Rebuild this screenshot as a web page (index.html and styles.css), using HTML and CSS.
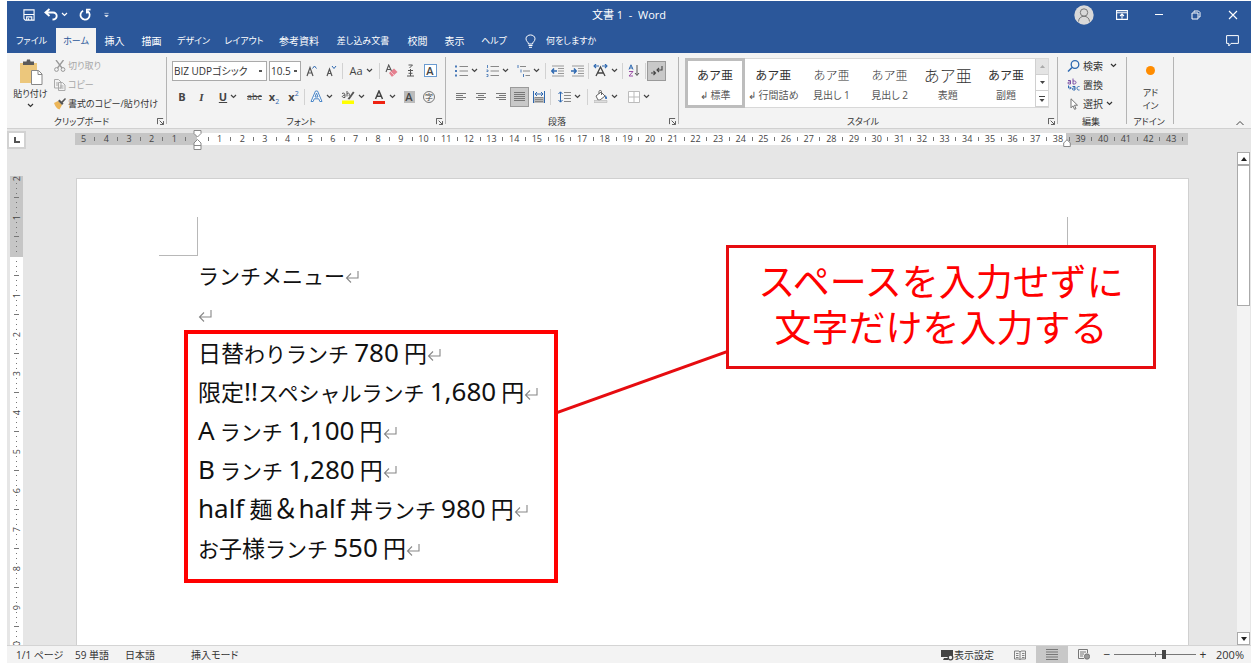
FILE: index.html
```html
<!DOCTYPE html>
<html lang="ja">
<head>
<meta charset="utf-8">
<title>文書 1 - Word</title>
<link rel="stylesheet" href="styles.css">
</head>
<body>
<svg class="defs" aria-hidden="true">
  <symbol id="chev" viewBox="0 0 7 7"><path d="M1 2l2.500 2.500L6 2" fill="none" stroke="currentColor" stroke-width="1.200"/></symbol>
  <symbol id="launch" viewBox="0 0 8 8"><path d="M.5 7V.5H7M3 3l4 4M7.500 3.500v4h-4" fill="none" stroke="#444" stroke-width="1"/></symbol>
  <symbol id="ret" viewBox="0 0 14 14"><path d="M13 1v7H2M6 3.500L1.500 8 6 12.500" fill="none" stroke="#888" stroke-width="1.100"/></symbol>
</svg>
<div class="app">
  <header class="titlebar">
    <div class="quick">
      <button class="tb" aria-label="上書き保存"><svg width="12" height="12" viewBox="0 0 13 13"><path d="M1 1h11v11H2.500L1 10.500zM1 6h11M4 12V8.500h5.500V12M6 10v2" fill="none" stroke="#fff" stroke-width="1.200"/></svg></button>
      <button class="tb undo" aria-label="元に戻す"><svg width="14" height="13" viewBox="0 0 14 13"><path d="M5.500 1L1.500 4.500l4 3.500M2 4.500h7c5 0 5 7-.5 7" fill="none" stroke="#fff" stroke-width="1.900"/></svg><svg class="chev"><use href="#chev"/></svg></button>
      <button class="tb redo" aria-label="やり直し"><svg width="12" height="13" viewBox="0 0 13 14"><path d="M4.500 3A5 5 0 1 0 9.500 3.500M12.500 1.800H8.500V6" fill="none" stroke="#fff" stroke-width="1.900"/></svg></button>
      <button class="tb" aria-label="カスタマイズ"><svg width="5" height="6" viewBox="0 0 6 7"><path d="M.5 1.500h5M1 4h4L3 6z" fill="#fff" stroke="#fff" stroke-width=".7"/></svg></button>
    </div>
    <h1>文書 1&nbsp; -&nbsp; Word</h1>
    <div class="window">
      <button class="avatar" aria-label="アカウント"><svg width="20" height="20" viewBox="0 0 20 20"><circle cx="10" cy="10" r="9.700" fill="#d9d9d9"/><circle cx="10" cy="7.500" r="3.700" fill="none" stroke="#777"/><path d="M4.500 16.500c.3-7 10.700-7 11 0" fill="none" stroke="#777"/></svg></button>
      <button class="tb wide" aria-label="リボンの表示オプション"><svg width="12" height="10" viewBox="0 0 12 10"><path d="M.6.6h10.800v8.800H.6zM.6 2.800h10.800M6 8.500v-4M4 6l2-2 2 2" fill="none" stroke="#fff" stroke-width="1.100"/></svg></button>
      <button class="tb wide" aria-label="最小化"><svg width="10" height="10" viewBox="0 0 10 10"><path d="M1 4.500h8" stroke="#fff"/></svg></button>
      <button class="tb wide" aria-label="元のサイズ"><svg width="10" height="10" viewBox="0 0 10 10"><path d="M1 3h6v6H1zM3 2.500V1h4.500L9 2.500V7H7.500" fill="none" stroke="#fff"/></svg></button>
      <button class="tb wide" aria-label="閉じる"><svg width="10" height="10" viewBox="0 0 10 10"><path d="M1 1l8 8M9 1L1 9" stroke="#fff" stroke-width="1.100"/></svg></button>
    </div>
  </header>

  <nav class="tabs">
    <button class="tab w-file">ファイル</button>
    <button class="tab w-home active">ホーム</button>
    <button class="tab w-two">挿入</button>
    <button class="tab w-two">描画</button>
    <button class="tab w-design">デザイン</button>
    <button class="tab w-layout">レイアウト</button>
    <button class="tab w-ref">参考資料</button>
    <button class="tab w-mail">差し込み文書</button>
    <button class="tab w-two">校閲</button>
    <button class="tab w-two">表示</button>
    <button class="tab w-help">ヘルプ</button>
    <button class="tab tell"><svg width="11" height="14" viewBox="0 0 11 14"><path d="M3.500 10c0-2-2.500-2.500-2.500-5.200C1-.3 10-.3 10 4.800 10 7.500 7.500 8 7.500 10zM3.500 11.500h4M4 13.300h3" fill="none" stroke="#fff"/></svg>何をしますか</button>
    <button class="comment" aria-label="コメント"><svg width="13" height="12" viewBox="0 0 13 12"><path d="M.6.6h11.800v7.800H5L2.800 11V8.400H.6z" fill="none" stroke="#fff"/></svg></button>
  </nav>

  <div class="ribbon">
    <section class="group g-clip">
      <div class="clip">
        <button class="paste">
          <svg width="24" height="27" viewBox="0 0 24 27"><path d="M1 4h17v20H1z" fill="#ecc77c"/><path d="M4 6V2.500h3.500L8 .5h3l.5 2H15V6z" fill="#5a5a5a"/><path d="M12.500 11.500h7l3.500 3.500v10.500H12.500z" fill="#fff" stroke="#888"/><path d="M19 11.500V15.500h4" fill="none" stroke="#888"/></svg>
          <span>貼り付け</span>
          <svg class="chev"><use href="#chev"/></svg>
        </button>
        <div class="cliplist">
          <button class="off"><svg width="12" height="12" viewBox="0 0 12 12"><path d="M2 0l6 8M9.500 0l-6 8" stroke="#999" stroke-width="1.300"/><circle cx="2.500" cy="9.500" r="1.900" fill="none" stroke="#999"/><circle cx="9" cy="9.500" r="1.900" fill="none" stroke="#999"/></svg>切り取り</button>
          <button class="off"><svg width="12" height="12" viewBox="0 0 12 12"><path d="M.5.5h4L7 3v6H.5zM4.500 3.500h4L11 6v5.500H4.500z" fill="#f3f3f3" stroke="#aaa"/><path d="M6 7h3.500M6 9h3.500M2 4h2M2 6h2" stroke="#aaa"/></svg>コピー</button>
          <button><svg width="12" height="12" viewBox="0 0 12 12"><path d="M0 5l4-2 4 4-2.500 4.500C3 11 1 8 0 5z" fill="#ecb557"/><path d="M4 3l1.500-1.500 4 4L8 7z" fill="#555"/><path d="M7 4l4-4 1 1-3.500 4z" fill="#555"/></svg>書式のコピー/貼り付け</button>
        </div>
      </div>
      <footer><span>クリップボード</span><button aria-label="クリップボードの詳細"><svg width="7" height="7"><use href="#launch"/></svg></button></footer>
    </section>

    <section class="group g-font">
      <div class="rows">
        <div class="row">
          <select class="sel-font" aria-label="フォント"><option>BIZ UDPゴシック</option></select>
          <select class="sel-size" aria-label="フォント サイズ"><option>10.5</option></select>
          <button class="b20" aria-label="フォント サイズの拡大"><svg width="11" height="12" viewBox="0 0 11 12"><path d="M1 11l3-8.500L7 11M2 8h4" fill="none" stroke="#555" stroke-width="1.200"/><path d="M6.500 3.500L8.500 1l2 2.500" fill="none" stroke="#2e68b0"/></svg></button>
          <button class="b20" aria-label="フォント サイズの縮小"><svg width="11" height="12" viewBox="0 0 11 12"><path d="M1 11l2.500-7L6 11M2 8.500h3" fill="none" stroke="#555" stroke-width="1.200"/><path d="M6 1l2 2.500L10 1" fill="none" stroke="#2e68b0"/></svg></button>
          <i class="sep"></i>
          <button class="b34">Aa<svg class="chev"><use href="#chev"/></svg></button>
          <i class="sep"></i>
          <button class="b20" aria-label="書式のクリア"><svg width="13" height="13" viewBox="0 0 13 13"><path d="M1 8l2.700-7L6.500 7M2 5.500h4" fill="none" stroke="#555" stroke-width="1.100"/><path d="M4 9l5-4.500 3.500 3.500-5 4.500H6.500z" fill="#e5808f"/><path d="M5.500 7.500L9 11" stroke="#f3c3ca"/></svg></button>
          <button class="b18" aria-label="ルビ"><svg width="11" height="13" viewBox="0 0 11 13"><path d="M3.500 1h4L4.500 4M3 6.500h5M5.500 5v7M3.500 9.300h4M2 12h7" fill="none" stroke="#555"/></svg></button>
          <button class="b20"><span class="boxed">A</span></button>
        </div>
        <div class="row">
          <button class="b20"><b>B</b></button>
          <button class="b18"><em>I</em></button>
          <button class="b34"><u><b>U</b></u><svg class="chev"><use href="#chev"/></svg></button>
          <button class="b18"><s>abc</s></button>
          <button class="b20"><span><b>x</b><sub>2</sub></span></button>
          <button class="b18"><span><b>x</b><sup>2</sup></span></button>
          <i class="sep"></i>
          <button class="b31" aria-label="文字の効果"><svg width="13" height="13" viewBox="0 0 13 13"><path d="M1 11.500L5.500 1h2L12 11.500H9.800l-1-2.700H4.200l-1 2.700zM5 7h3L6.500 3z" fill="#fff" stroke="#4a86c8"/></svg><svg class="chev"><use href="#chev"/></svg></button>
          <button class="b31" aria-label="蛍光ペンの色"><svg width="14" height="14" viewBox="0 0 14 14"><path d="M1 10.500h12V14H1z" fill="#ff0"/><path d="M6.500 9L12 1.500l1.500 1L8.500 9.500z" fill="#555"/><path d="M1 3.500c3-1 3 0 3 4-3 .5-4-2 0-2.500M6 1v5.500M6 4c2-2 3 0 2 2" fill="none" stroke="#555"/></svg><svg class="chev"><use href="#chev"/></svg></button>
          <button class="b31" aria-label="フォントの色"><svg width="14" height="14" viewBox="0 0 14 14"><path d="M1 11h12v3H1z" fill="#e21"/><path d="M3.500 9L7 1l3.500 8M4.800 6.300h4.400" fill="none" stroke="#444" stroke-width="1.500"/></svg><svg class="chev"><use href="#chev"/></svg></button>
          <button class="b20"><span class="shaded">A</span></button>
          <button class="b20"><span class="ring">字</span></button>
        </div>
      </div>
      <footer><span>フォント</span><button aria-label="フォントの詳細"><svg width="7" height="7"><use href="#launch"/></svg></button></footer>
    </section>

    <section class="group g-para">
      <div class="rows">
        <div class="row">
          <button class="b31" aria-label="箇条書き"><svg width="13" height="12" viewBox="0 0 13 12"><path d="M4.500 1.500H13M4.500 6H13M4.500 10.500H13" stroke="#888"/><path d="M0 1.500h2M0 6h2M0 10.500h2" stroke="#4a7ab8" stroke-width="2"/></svg><svg class="chev"><use href="#chev"/></svg></button>
          <button class="b31" aria-label="段落番号"><svg width="13" height="12" viewBox="0 0 13 12"><path d="M4.500 1.500H13M4.500 6H13M4.500 10.500H13" stroke="#888"/><path d="M1.500 0v3M.5 5h1.500v1.500H.5M.5 9.500H2v2H.5" fill="none" stroke="#4a7ab8" stroke-width=".9"/></svg><svg class="chev"><use href="#chev"/></svg></button>
          <button class="b31" aria-label="アウトライン"><svg width="13" height="12" viewBox="0 0 13 12"><path d="M3 1.500h6M6 6h7M8.500 10.500H13" stroke="#888"/><path d="M1 0v3M4 4.500V7.500M6.500 9v3" stroke="#4a7ab8"/></svg><svg class="chev"><use href="#chev"/></svg></button>
          <i class="sep"></i>
          <button class="b20" aria-label="インデントを減らす"><svg width="13" height="12" viewBox="0 0 13 12"><path d="M1 1h12M7 3.500h6M7 6h6M7 8.500h6M1 11h12" stroke="#999"/><path d="M6 6H1M3 3.500L.8 6 3 8.500" fill="none" stroke="#2e68b0" stroke-width="1.500"/></svg></button>
          <button class="b20" aria-label="インデントを増やす"><svg width="13" height="12" viewBox="0 0 13 12"><path d="M1 1h12M7 3.500h6M7 6h6M7 8.500h6M1 11h12" stroke="#999"/><path d="M0 6h5M3 3.500L5.200 6 3 8.500" fill="none" stroke="#2e68b0" stroke-width="1.500"/></svg></button>
          <i class="sep"></i>
          <button class="b31" aria-label="拡張書式"><svg width="15" height="13" viewBox="0 0 15 13"><path d="M3 12L7.500 3 12 12M4.500 9h6" fill="none" stroke="#444" stroke-width="1.300"/><path d="M1 2h5M3 0L1 2l2 2M9 2h5M12 0l2 2-2 2" fill="none" stroke="#2e68b0" stroke-width="1.100"/></svg><svg class="chev"><use href="#chev"/></svg></button>
          <i class="sep"></i>
          <button class="b20" aria-label="並べ替え"><svg width="12" height="13" viewBox="0 0 12 13"><path d="M1 5.500L3 .8l2 4.700M1.800 4h2.500" fill="none" stroke="#2e68b0"/><path d="M1 7.500h4l-4 4.500h4" fill="none" stroke="#9a4fa5"/><path d="M9 1v10M7 9l2 2.500L11 9" fill="none" stroke="#555"/></svg></button>
          <i class="sep"></i>
          <button class="b18 pressed" aria-label="編集記号の表示"><svg width="13" height="12" viewBox="0 0 13 12"><path d="M12 1v4H7M9 3L7 5l2 2M1 8h4M3.500 6l2 2-2 2" fill="none" stroke="#444" stroke-width="1.100"/></svg></button>
        </div>
        <div class="row">
          <button class="b20" aria-label="左揃え"><svg width="10" height="10" viewBox="0 0 10 10"><path d="M0 1.500h10M0 3.500h7M0 5.500h10M0 7.500h7" stroke="#777"/></svg></button>
          <button class="b20" aria-label="中央揃え"><svg width="10" height="10" viewBox="0 0 10 10"><path d="M0 1.500h10M2 3.500h6M0 5.500h10M2 7.500h6" stroke="#777"/></svg></button>
          <button class="b18" aria-label="右揃え"><svg width="10" height="10" viewBox="0 0 10 10"><path d="M0 1.500h10M3 3.500h7M0 5.500h10M3 7.500h7" stroke="#777"/></svg></button>
          <button class="b18 pressed" aria-label="両端揃え"><svg width="11" height="10" viewBox="0 0 11 10"><path d="M0 .5h11M0 2.500h11M0 4.500h11M0 6.500h11M0 8.500h11" stroke="#777"/></svg></button>
          <button class="b20" aria-label="均等割り付け"><svg width="12" height="12" viewBox="0 0 12 12"><path d="M1 6h10v6H1z" fill="#bbb"/><path d="M.5 0v12M11.500 0v12" stroke="#2e68b0"/><path d="M2 3h8M4 1L2 3l2 2M8 1l2 2-2 2" fill="none" stroke="#2e68b0"/><path d="M2 6.500h8M2 8.500h8M2 10.500h8" stroke="#888"/></svg></button>
          <i class="sep"></i>
          <button class="b34" aria-label="行間"><svg width="13" height="12" viewBox="0 0 13 12"><path d="M6 1.500h7M6 4.500h7M6 7.500h7M6 10.500h7" stroke="#888"/><path d="M2.500 1v10M.5 3l2-2.200 2 2.200M.5 9l2 2.200 2-2.200" fill="none" stroke="#2e68b0"/></svg><svg class="chev"><use href="#chev"/></svg></button>
          <i class="sep"></i>
          <button class="b34" aria-label="塗りつぶし"><svg width="14" height="13" viewBox="0 0 14 13"><path d="M2 6l5-4 4 4-5 4H4zM5 4V1.500c0-1.500 2.500-1.500 2.500 0V5" fill="#fff" stroke="#666"/><path d="M11.500 5c2 3 2 4 .5 4s-1-2-.5-4z" fill="#2e68b0"/><path d="M0 10.500h13v2H0z" fill="#ddd" stroke="#aaa" stroke-width=".5"/></svg><svg class="chev"><use href="#chev"/></svg></button>
          <button class="b31" aria-label="罫線"><svg width="12" height="12" viewBox="0 0 12 12"><path d="M.5.5h11v11H.5zM6 .5v11M.5 6h11" fill="#fff" stroke="#bbb"/></svg><svg class="chev"><use href="#chev"/></svg></button>
        </div>
      </div>
      <footer><span>段落</span><button aria-label="段落の設定"><svg width="7" height="7"><use href="#launch"/></svg></button></footer>
    </section>

    <section class="group g-style">
      <div class="gallery">
        <button class="style chosen"><span class="sample">あア亜</span><span>↲ 標準</span></button>
        <button class="style"><span class="sample">あア亜</span><span>↲ 行間詰め</span></button>
        <button class="style"><span class="sample thin">あア亜</span><span>見出し 1</span></button>
        <button class="style"><span class="sample thin">あア亜</span><span>見出し 2</span></button>
        <button class="style"><span class="sample thin big">あア亜</span><span>表題</span></button>
        <button class="style"><span class="sample">あア亜</span><span>副題</span></button>
        <div class="spin">
          <button class="dim" aria-label="前の行"><svg width="5" height="3"><path d="M0 3l2.500-3L5 3z" fill="#aaa"/></svg></button>
          <button aria-label="次の行"><svg width="5" height="3"><path d="M0 0l2.500 3L5 0z" fill="#444"/></svg></button>
          <button aria-label="その他"><svg width="6" height="6"><path d="M0 .5h6" stroke="#444"/><path d="M.5 3h5L3 6z" fill="#444"/></svg></button>
        </div>
      </div>
      <footer><span>スタイル</span><button aria-label="スタイルの詳細"><svg width="7" height="7"><use href="#launch"/></svg></button></footer>
    </section>

    <section class="group g-edit">
      <div class="editlist">
        <button><svg width="13" height="12" viewBox="0 0 13 12"><circle cx="8" cy="4.500" r="3.800" fill="none" stroke="#2e68b0" stroke-width="1.300"/><path d="M5 7.500L1 11.500" stroke="#2e68b0" stroke-width="1.500"/></svg>検索<svg class="chev far"><use href="#chev"/></svg></button>
        <button><svg width="13" height="13" viewBox="0 0 13 13"><path d="M1 2.500h2.500V6H2C.5 6 .5 4 2 4h1.500M6 .5V6h1.500c2 0 2-3 0-3H6" fill="none" stroke="#7a4fa5"/><path d="M1.500 7.500v2.500H4M3 8.700L4.300 10 3 11.300M5.500 8.500h2.500V12H6.500c-1.500 0-1.500-2 0-2H8M12.500 8.500h-1c-2 0-2 3.500 0 3.500h1" fill="none" stroke="#2e68b0"/></svg>置換</button>
        <button><svg width="13" height="12" viewBox="0 0 13 12"><path d="M4 .8v9l2-2 1.500 3.500 1.500-.6-1.500-3.500h3z" fill="#fff" stroke="#666" stroke-width=".9"/></svg>選択<svg class="chev"><use href="#chev"/></svg></button>
      </div>
      <footer><span>編集</span></footer>
    </section>

    <section class="group g-add">
      <button class="addin"><i class="dot"></i><span>アド<br>イン</span></button>
      <footer><span>アドイン</span></footer>
    </section>
    <button class="collapse" aria-label="リボンを折りたたむ"><svg width="8" height="6" viewBox="0 0 8 6"><path d="M.5 5L4 1.500 7.500 5" fill="none" stroke="#444"/></svg></button>
  </div>

  <div class="rulerbar">
    <button class="tabstop" aria-label="タブの種類"><svg width="6" height="6"><path d="M1 0v5h5" fill="none" stroke="#555" stroke-width="2"/></svg></button>
    <div class="hruler">
      <div class="marks" id="hmarks"></div>
      <svg class="ind left" width="9" height="20" viewBox="0 0 9 20"><path d="M1 .5h7v3L4.500 7 1 3.500zM4.500 9.500L8 13v6.500H1V13zM1 15.500h7" fill="#fff" stroke="#888"/></svg>
      <svg class="ind right" width="8" height="8" viewBox="0 0 8 8"><path d="M4 .7L7.300 4v3.500H.7V4z" fill="#fff" stroke="#888"/></svg>
    </div>
  </div>

  <main class="work">
    <div class="vruler" id="vmarks"></div>
    <article class="page">
      <i class="corner tl"></i><i class="corner tr"></i>
      <div class="text">
        <p><span class="k">ランチメニュー</span><svg class="ret"><use href="#ret"/></svg></p>
        <p><svg class="ret"><use href="#ret"/></svg></p>
        <p>日替<span class="k">わりランチ</span> <span class="n">780</span> 円<svg class="ret"><use href="#ret"/></svg></p>
        <p>限定<span class="n">!!</span><span class="k">スペシャルランチ</span> <span class="n">1,680</span> 円<svg class="ret"><use href="#ret"/></svg></p>
        <p><span class="n">A</span> <span class="k">ランチ</span> <span class="n">1,100</span> 円<svg class="ret"><use href="#ret"/></svg></p>
        <p><span class="n">B</span> <span class="k">ランチ</span> <span class="n">1,280</span> 円<svg class="ret"><use href="#ret"/></svg></p>
        <p><span class="n">half</span> 麺<span class="n">＆half</span> 丼<span class="k">ランチ</span> <span class="n">980</span> 円<svg class="ret"><use href="#ret"/></svg></p>
        <p><span class="k">お</span>子様<span class="k">ランチ</span> <span class="n">550</span> 円<svg class="ret"><use href="#ret"/></svg></p>
      </div>
      <div class="frame"></div>
      <svg class="leader" width="172" height="66" viewBox="0 0 172 66"><path d="M0 63.500L172 2" stroke="#e60c10" stroke-width="3"/></svg>
      <aside class="callout">スペースを入力せずに<br>文字だけを入力する</aside>
    </article>
    <div class="scroll">
      <button aria-label="上へ"><svg width="6" height="4"><path d="M0 4l3-4 3 4z" fill="#222"/></svg></button>
      <div class="thumb"></div>
      <button class="down" aria-label="下へ"><svg width="6" height="4"><path d="M0 0l3 4 3-4z" fill="#222"/></svg></button>
    </div>
  </main>

  <footer class="status">
    <span class="s-page">1/1 ページ</span><span class="s-words">59 単語</span><span class="s-lang">日本語</span><span>挿入モード</span>
    <div class="views">
      <button class="disp"><svg width="13" height="12" viewBox="0 0 13 12"><path d="M0 1h12v7H0zM3 9h4v2H2z" fill="#444"/><circle cx="9.500" cy="8.500" r="2.300" fill="#f3f3f3" stroke="#444" stroke-width="1.300"/></svg>表示設定</button>
      <button class="view" aria-label="閲覧モード"><svg width="12" height="10" viewBox="0 0 12 10"><path d="M.5 1h4.500L6 2l1-1h4.500v8H7L6 9.700 5 9H.5zM6 2v7M2 3.500h2.500M2 5.500h2.500M8 3.500h2.500M8 5.500h2.500M2 7.500h2.500M8 7.500h2.500" fill="none" stroke="#777" stroke-width=".9"/></svg></button>
      <button class="view on" aria-label="印刷レイアウト"><svg width="12" height="12" viewBox="0 0 12 12"><path d="M0 .5h12M0 3h12M0 5.500h12M0 8h12M0 10.500h12" stroke="#777"/></svg></button>
      <button class="view" aria-label="Web レイアウト"><svg width="12" height="11" viewBox="0 0 12 11"><path d="M6 9.500H.5v-9h9V4M2 3h6M2 5h4M2 7h3" fill="none" stroke="#777"/><circle cx="9" cy="7.500" r="2.700" fill="#999" stroke="#666" stroke-width=".7"/></svg></button>
      <button class="pm">−</button>
      <input type="range" min="0" max="100" value="62" aria-label="ズーム">
      <button class="pm">+</button>
      <span class="pct">200%</span>
    </div>
  </footer>
</div>
<script src="ruler.js"></script>
</body>
</html>
```
FILE: styles.css
```css
* { box-sizing: border-box; }
html, body { height: 100%; }
body {
  margin: 0;
  padding: 1px 8px 2px 7px;
  background: #fff;
  color: #333;
  font: 10px/12px "Open Sans", "Noto Sans CJK JP", sans-serif;
  font-feature-settings: "palt";
}
button, select, input { font: inherit; color: inherit; font-feature-settings: inherit; }
button {
  margin: 0; padding: 0; border: 0; background: none;
  display: flex; align-items: center; justify-content: center;
  white-space: nowrap; flex: none;
}
svg { flex: none; }
.defs { display: none; }
.chev { width: 7px; height: 7px; }
.app { display: flex; flex-direction: column; height: 100%; }

/* title bar */
.titlebar {
  display: grid; grid-template-columns: 1fr auto 1fr; align-items: center;
  height: 27px; flex: none; background: #2b579a; color: #fff;
}
.quick { display: flex; align-items: center; padding-left: 12px; }
.tb { width: 20px; height: 24px; }
.tb.undo { width: 34px; gap: 3px; }
.tb.redo { width: 23px; }
h1 { margin: 0; font-size: 11px; font-weight: 400; }
.window { display: flex; align-items: center; justify-content: flex-end; }
.tb.wide { width: 37px; }
.avatar { width: 20px; height: 20px; margin-right: 9px; }

/* tabs */
.tabs { display: flex; height: 25px; flex: none; background: #2b579a; color: #fff; }
.tab.active { background: #f3f3f3; color: #2b579a; }
.w-file { width: 49px; }
.w-home { width: 40px; }
.w-two { width: 37px; }
.w-design { width: 47px; }
.w-layout { width: 54px; }
.w-ref { width: 56px; }
.w-mail { width: 72px; }
.w-help { width: 42px; }
.w-file, .w-home, .w-design, .w-layout, .w-help, .w-mail, .tell { font-size: 9px; }
.tell { gap: 10px; padding-left: 10px; }
.comment { margin-left: auto; width: 38px; }

/* ribbon */
.ribbon { position: relative; display: flex; height: 76px; flex: none; background: #f3f3f3; border-bottom: 1px solid #d0d0d0; }
.group { position: relative; display: flex; flex-direction: column; justify-content: space-between; flex: none; padding-top: 3px; }
.group::after { content: ""; position: absolute; right: 0; top: 4px; bottom: 4px; width: 1px; background: #b4b4b4; }
.group footer { display: flex; height: 13px; padding-right: 3px; align-items: center; font-size: 9px; }
.group footer span { flex: 1; text-align: center; }
.group footer button { width: 8px; }
.g-clip { width: 160px; }
.g-font { width: 279px; }
.g-para { width: 233px; }
.g-style { flex: 1; }
.g-edit { width: 69px; }
.g-add { width: 47px; }
.clip { display: flex; }
.paste { flex-direction: column; width: 47px; gap: 2px; padding-top: 3px; justify-content: flex-start; font-size: 9px; }
.cliplist { display: flex; flex-direction: column; align-items: flex-start; font-size: 9px; }
.cliplist button { height: 19px; gap: 2px; }
.off { color: #a6a6a6; }

.rows { display: flex; flex-direction: column; gap: 5px; padding: 4px 0 0 5px; }
.row { display: flex; align-items: center; height: 21px; }
.row button { height: 20px; font-size: 11px; color: #444; }
.row button .chev { margin-left: 3px; }
.row select {
  appearance: none; height: 20px; padding: 0 1px; border: 1px solid #aaa; border-radius: 0;
  background: #fff linear-gradient(#555, #555) no-repeat right 4px center / 3px 2px;
}
.sel-font { width: 95px; margin-right: 2px; }
.row .sel-size { width: 32px; background-position: right 3px center; }
.b18 { width: 19px; }
.b20 { width: 20px; }
.b31 { width: 31px; }
.b34 { width: 34px; }
.sep { width: 1px; height: 16px; background: #d2d2d2; margin: 0 1px; }
sup, sub { color: #2e68b0; font-size: 7px; line-height: 1px; }
em { font-family: "Liberation Serif", serif; font-weight: 700; }
s { font-size: 9px; }
.boxed { width: 13px; height: 13px; border: 1px solid #6a9bd0; background: #fff; line-height: 12px; font-weight: 600; }
.shaded { width: 11px; height: 12px; background: #bbb; line-height: 12px; font-weight: 600; }
.ring { width: 12px; height: 12px; border: 1px solid #777; border-radius: 50%; font-size: 8px; line-height: 10px; }
.pressed { background: #c8c8c8; outline: 1px solid #9a9a9a; outline-offset: -1px; }

/* style gallery */
.gallery { display: flex; height: 50px; margin: 2px 9px 0 6px; background: #fff; border: 1px solid #d8d8d8; }
.style { flex: 1 1 0; min-width: 0; flex-direction: column; gap: 5px; color: #555; padding-top: 3px; }
.chosen { outline: 3px solid #bdbdbd; outline-offset: -2px; }
.sample { font-size: 12px; line-height: 16px; color: #333; font-feature-settings: normal; }
.thin { font-weight: 300; }
.big { font-size: 16px; }
.spin { display: flex; flex-direction: column; width: 13px; border-left: 1px solid #d0d0d0; }
.spin button { flex: 1; border-bottom: 1px solid #d0d0d0; }
.spin .dim { background: #e4e4e4; }

.editlist { display: flex; flex-direction: column; padding-left: 9px; }
.editlist button { height: 19px; gap: 3px; justify-content: flex-start; }
.far { margin-left: 4px; }
.addin { flex-direction: column; gap: 11px; padding-top: 10px; line-height: 13px; font-size: 9px; }
.dot { width: 9px; height: 9px; border-radius: 50%; background: #ff8c00; }
.collapse { align-self: flex-end; justify-content: flex-end; width: 77px; padding: 0 7px 2px 0; }

/* horizontal ruler */
.rulerbar { display: flex; align-items: flex-start; height: 22px; flex: none; background: #e6e6e6; padding: 2px 63px 0 0; }
.tabstop { width: 19px; height: 18px; background: #fff; border: 2px solid #d2d2d2; }
.hruler {
  position: relative; flex: 1; height: 12px; margin: 2px 0 0 49px; padding-left: 3px;
  background: linear-gradient(90deg, #c6c6c6 11%, #fff 11%, #fff 89%, #c6c6c6 89%);
}
.marks { display: flex; height: 12px; align-items: center; font: 9px/12px "Open Sans", sans-serif; color: #444; }
.marks span { flex: 1 1 0; width: 0; display: flex; justify-content: center; }
.marks .t::before { content: ""; width: 1px; height: 4px; background: #777; }
.ind { position: absolute; }
.ind.left { left: 11%; top: -3px; margin-left: -4px; }
.ind.right { left: 89%; top: 6px; margin-left: -3px; }

/* workspace */
.work { flex: 1; min-height: 0; display: flex; align-items: stretch; background: #e6e6e6; overflow: hidden; }
.vruler {
  width: 13px; margin: 25px 0 0 3px; overflow: hidden; flex: none;
  background: linear-gradient(#c6c6c6 81px, #fff 81px);
}
.unit { display: flex; flex-direction: column; height: 39px; font-size: 9px; color: #444; }
.unit span { flex: 1 1 0; min-height: 0; display: flex; align-items: center; justify-content: center; }
.unit b { font-weight: 400; writing-mode: vertical-rl; transform: rotate(180deg); line-height: 12px; }
.unit .d::before { content: ""; width: 1px; height: 1px; background: #777; }
.unit .l::before { content: ""; width: 5px; height: 1px; background: #777; }
.page { position: relative; flex: 1; margin: 27px 48px 0 53px; padding: 76px 121px 0; background: #fff; border: 1px solid #d0d0d0; border-bottom: 0; }
.corner { position: absolute; top: 38px; width: 39px; height: 39px; border-bottom: 1px solid #b8b8b8; }
.tl { left: 82px; border-right: 1px solid #b8b8b8; }
.tr { right: 82px; border-left: 1px solid #b8b8b8; }
.text { color: #111; font: 23px/39px "Noto Sans CJK JP", sans-serif; }
.text p { margin: 0; height: 39px; white-space: nowrap; }
.k { font-size: 21px; line-height: 1; }
.n { font-family: "Noto Sans", "Noto Sans CJK JP", sans-serif; font-size: 26px; line-height: 1; }
.ret { width: 14px; height: 14px; }
.frame { position: absolute; left: 107px; top: 151px; width: 374px; height: 253px; border: 4px solid #f00; }
.leader { position: absolute; left: 480px; top: 170px; }
.callout {
  position: absolute; left: 649px; top: 66px; width: 430px; padding: 9px 0 17px;
  border: 3px solid #e60c10; background: #fff; color: #f00;
  font: 37px/46px "Noto Sans CJK JP", sans-serif; font-feature-settings: normal; text-align: center;
}
.scroll { width: 13px; flex: none; margin: 1px 1px 0 0; display: flex; flex-direction: column; background: #f3f3f3; }
.scroll button { height: 13px; background: #fff; border: 1px solid #aaa; }
.thumb { height: 141px; background: #fff; border: 1px solid #aaa; }
.down { margin-top: auto; }

/* status bar */
.status { display: flex; align-items: center; height: 18px; flex: none; background: #f3f3f3; border-top: 1px solid #d4d4d4; padding-left: 9px; }
.s-page { width: 59px; }
.s-words { width: 50px; }
.s-lang { width: 66px; }
.views { display: flex; align-items: center; margin-left: auto; padding-right: 7px; }
.disp { margin-right: 10px; }
.view { width: 32px; height: 17px; }
.on { background: #c8c8c8; }
.pm { width: 14px; font-size: 12px; }
.pct { width: 34px; text-align: right; font-size: 11px; }
input[type=range] {
  appearance: none; width: 82px; height: 12px; margin: 0;
  background: linear-gradient(#777, #777) no-repeat 50% 50% / 1px 5px, linear-gradient(#777, #777) no-repeat center / 100% 1px;
}
input[type=range]::-webkit-slider-thumb { appearance: none; width: 4px; height: 9px; background: #444; }
```
FILE: ruler.js
```js
// Horizontal ruler: numbers with a tick between each pair
var h = '';
for (var i = -5; i <= 43; i++) {
  h += '<span>' + (i === 0 ? '' : Math.abs(i)) + '</span><span class="t"></span>';
}
document.getElementById('hmarks').innerHTML = h;

// Vertical ruler: number, three dots, half line, three dots
var v = '';
var dots = '<span class="d"></span>'.repeat(3);
for (var j = -2; j <= 10; j++) {
  v += '<div class="unit"><span><b>' + (j === 0 ? '' : Math.abs(j)) + '</b></span>' + dots + '<span class="l"></span>' + dots + '</div>';
}
document.getElementById('vmarks').innerHTML = v;
```
